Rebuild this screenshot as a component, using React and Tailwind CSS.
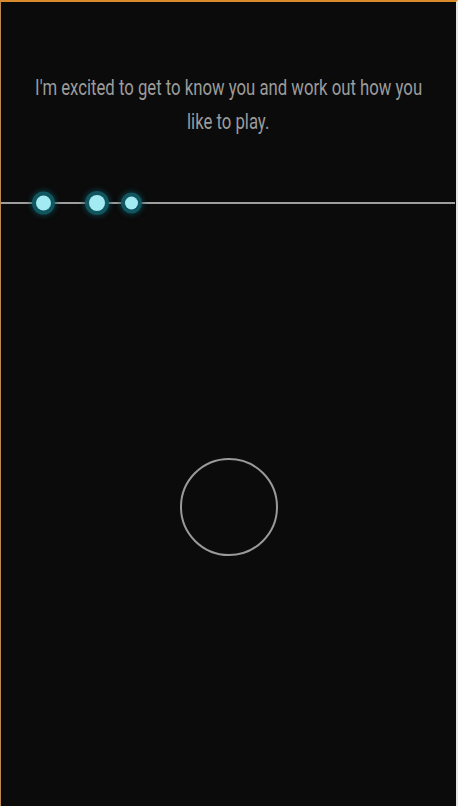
import React from "react";

const Dot = ({ size }) => (
    <div className={`rounded-full bg-[#a3ebf3] ${size} shadow-[0_0_0_4px_rgba(18,88,98,0.95),0_0_4px_6px_rgba(12,72,82,0.55)]`} />
);

const App = () => {
    return (
        <div className="w-[458px] h-[806px] bg-[#0b0b0b] border-t-2 border-t-[#d98a2b] border-l border-l-[#b9894f] border-r-2 border-r-[#e6e6e6] flex flex-col overflow-hidden">

            {/* Intro text */}
            <div className="pt-[69px] flex flex-col items-center text-[#9c9c9c] text-[22px] leading-[34px] font-['Roboto',sans-serif]">
                <p className="whitespace-nowrap scale-x-[0.76]">I'm excited to get to know you and work out how you</p>
                <p className="whitespace-nowrap scale-x-[0.76]">like to play.</p>
            </div>

            {/* Progress track */}
            <div className="relative mt-[63px] h-[2px] mr-[1px] bg-[#9e9e9e]">
                <div className="absolute left-[35px] top-1/2 -translate-y-1/2">
                    <Dot size="w-[15px] h-[15px]" />
                </div>
                <div className="absolute left-[88px] top-1/2 -translate-y-1/2">
                    <Dot size="w-[16px] h-[16px]" />
                </div>
                <div className="absolute left-[124px] top-1/2 -translate-y-1/2">
                    <Dot size="w-[13px] h-[13px]" />
                </div>
            </div>

            {/* Record button */}
            <div className="flex justify-center mt-[254px]">
                <div className="w-[98px] h-[98px] rounded-full border-2 border-[#9a9a9a]" />
            </div>
        </div>
    );
};

export default App;
